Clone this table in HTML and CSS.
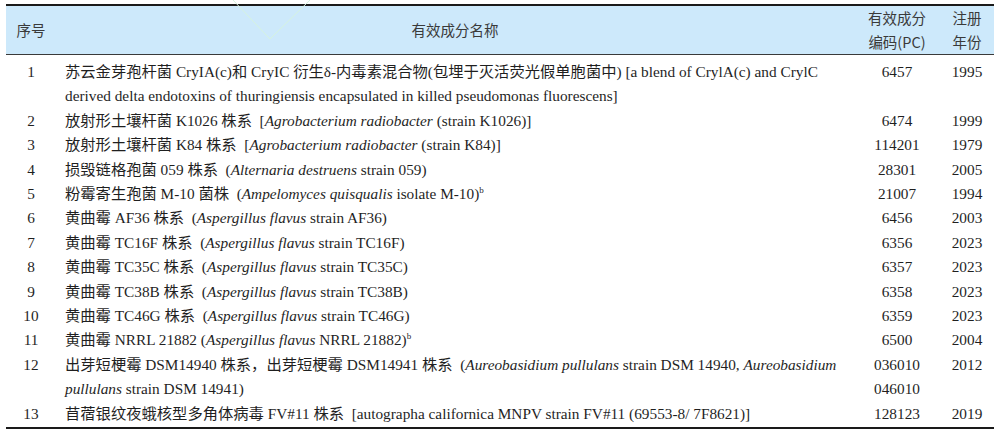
FILE: index.html
```html
<!DOCTYPE html>
<html lang="zh-CN">
<head>
<meta charset="utf-8">
<title>有效成分</title>
<link rel="stylesheet" href="styles.css">
</head>
<body>
<div class="wrap">
<svg class="mark" width="100" height="45" viewBox="0 0 100 45"><polyline points="3,0 40,39 80,0" fill="none" stroke="#d6f3de" stroke-width="1"/></svg>
<table class="tbl">
  <colgroup>
    <col class="c-no"><col class="c-name"><col class="c-code"><col class="c-year">
  </colgroup>
  <thead>
    <tr>
      <th class="ctr">序号</th>
      <th class="ctr">有效成分名称</th>
      <th class="ctr">有效成分<br>编码(PC)</th>
      <th class="ctr">注册<br>年份</th>
    </tr>
  </thead>
  <tbody>
    <tr class="first">
      <td class="ctr">1</td>
      <td class="name">苏云金芽孢杆菌 CryIA(c)和 CryIC 衍生δ-内毒素混合物(包埋于灭活荧光假单胞菌中) [a blend of CrylA(c) and CrylC<br>derived delta endotoxins of thuringiensis encapsulated in killed pseudomonas fluorescens]</td>
      <td class="ctr">6457</td>
      <td class="ctr">1995</td>
    </tr>
    <tr>
      <td class="ctr">2</td>
      <td class="name">放射形土壤杆菌 K1026 株系 &nbsp;[<i>Agrobacterium radiobacter</i> (strain K1026)]</td>
      <td class="ctr">6474</td>
      <td class="ctr">1999</td>
    </tr>
    <tr>
      <td class="ctr">3</td>
      <td class="name">放射形土壤杆菌 K84 株系 &nbsp;[<i>Agrobacterium radiobacter</i> (strain K84)]</td>
      <td class="ctr">114201</td>
      <td class="ctr">1979</td>
    </tr>
    <tr>
      <td class="ctr">4</td>
      <td class="name">损毁链格孢菌 059 株系 &nbsp;(<i>Alternaria destruens</i> strain 059)</td>
      <td class="ctr">28301</td>
      <td class="ctr">2005</td>
    </tr>
    <tr>
      <td class="ctr">5</td>
      <td class="name">粉霉寄生孢菌 M-10 菌株 &nbsp;(<i>Ampelomyces quisqualis</i> isolate M-10)<sup>b</sup></td>
      <td class="ctr">21007</td>
      <td class="ctr">1994</td>
    </tr>
    <tr>
      <td class="ctr">6</td>
      <td class="name">黄曲霉 AF36 株系 &nbsp;(<i>Aspergillus flavus</i> strain AF36)</td>
      <td class="ctr">6456</td>
      <td class="ctr">2003</td>
    </tr>
    <tr>
      <td class="ctr">7</td>
      <td class="name">黄曲霉 TC16F 株系 &nbsp;(<i>Aspergillus flavus</i> strain TC16F)</td>
      <td class="ctr">6356</td>
      <td class="ctr">2023</td>
    </tr>
    <tr>
      <td class="ctr">8</td>
      <td class="name">黄曲霉 TC35C 株系 &nbsp;(<i>Aspergillus flavus</i> strain TC35C)</td>
      <td class="ctr">6357</td>
      <td class="ctr">2023</td>
    </tr>
    <tr>
      <td class="ctr">9</td>
      <td class="name">黄曲霉 TC38B 株系 &nbsp;(<i>Aspergillus flavus</i> strain TC38B)</td>
      <td class="ctr">6358</td>
      <td class="ctr">2023</td>
    </tr>
    <tr>
      <td class="ctr">10</td>
      <td class="name">黄曲霉 TC46G 株系 &nbsp;(<i>Aspergillus flavus</i> strain TC46G)</td>
      <td class="ctr">6359</td>
      <td class="ctr">2023</td>
    </tr>
    <tr>
      <td class="ctr">11</td>
      <td class="name">黄曲霉 NRRL 21882 (<i>Aspergillus flavus</i> NRRL 21882)<sup>b</sup></td>
      <td class="ctr">6500</td>
      <td class="ctr">2004</td>
    </tr>
    <tr>
      <td class="ctr">12</td>
      <td class="name">出芽短梗霉 DSM14940 株系，出芽短梗霉 DSM14941 株系 &nbsp;(<i>Aureobasidium pullulans</i> strain DSM 14940, <i>Aureobasidium</i><br><i>pullulans</i> strain DSM 14941)</td>
      <td class="ctr">036010<br>046010</td>
      <td class="ctr">2012</td>
    </tr>
    <tr class="last">
      <td class="ctr">13</td>
      <td class="name">苜蓿银纹夜蛾核型多角体病毒 FV#11 株系 &nbsp;[autographa californica MNPV strain FV#11 (69553-8/ 7F8621)]</td>
      <td class="ctr">128123</td>
      <td class="ctr">2019</td>
    </tr>
  </tbody>
</table>
</div>
</body>
</html>
```

FILE: styles.css
```css
html, body {
  margin: 0;
  padding: 0;
  background: #ffffff;
}

.wrap {
  position: relative;
  padding: 4px 6px 0 6px;
}

.mark {
  position: absolute;
  left: 230px;
  top: 0;
  z-index: 2;
  pointer-events: none;
}

.tbl {
  width: 988px;
  border-collapse: collapse;
  table-layout: fixed;
  font-family: "Liberation Serif", "Noto Sans CJK SC", serif;
  font-size: 15.3px;
  color: #1f1f1f;
}

.c-no { width: 50px; }
.c-name { width: 798px; }
.c-code { width: 86px; }
.c-year { width: 54px; }

.tbl thead tr {
  background: #cde9fb;
  border-top: 2px solid #1a1a1a;
  border-bottom: 1px solid #3a3a3a;
}

.tbl th {
  font-family: "Noto Sans CJK SC", "Liberation Sans", sans-serif;
  font-weight: normal;
  color: #3a3a3a;
  font-size: 14.5px;
  line-height: 24px;
  padding: 0;
  height: 48px;
  vertical-align: middle;
}

.tbl td {
  padding: 0;
  line-height: 24.4px;
  vertical-align: top;
  white-space: nowrap;
}

.tbl tr.first td {
  padding-top: 5px;
}

.tbl tr.last {
  border-bottom: 2px solid #1a1a1a;
}

.tbl tr.last td {
  padding-bottom: 1px;
}

.ctr {
  text-align: center;
}

.name {
  text-align: left;
  padding-left: 9px !important;
}

.tbl sup {
  font-size: 9px;
  line-height: 0;
  vertical-align: 6px;
}
```
